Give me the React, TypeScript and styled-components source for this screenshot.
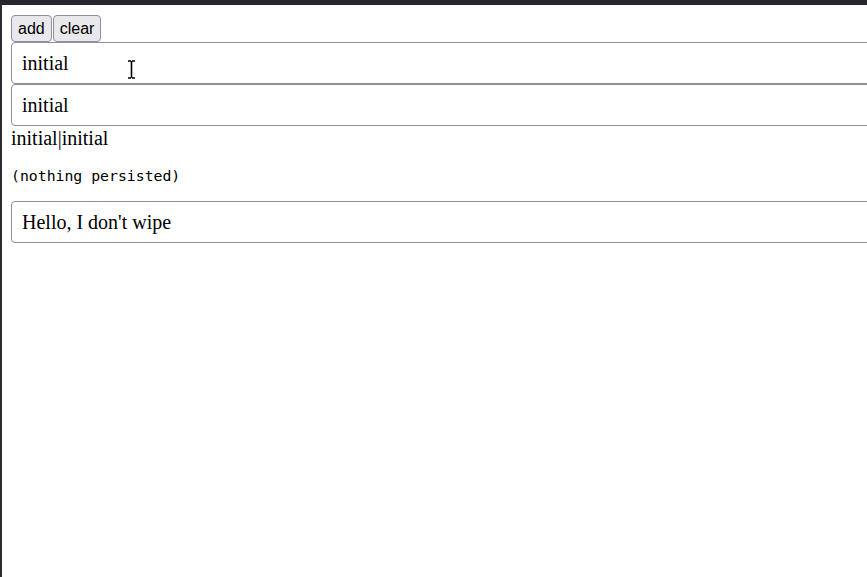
import React, { useState } from "react";
import styled, { createGlobalStyle } from "styled-components";

const Global = createGlobalStyle`
  html, body {
    margin: 0;
    padding: 0;
    background: #ffffff;
  }
  body {
    font-family: "Liberation Serif", "Times New Roman", serif;
  }
`;

const Frame = styled.div`
  box-sizing: border-box;
  min-height: 100vh;
  border-top: 5px solid #26262c;
  border-left: 2px solid #2c2c31;
  padding: 10px 0 0 9px;
  overflow: hidden;
  position: relative;
`;

const Stack = styled.div`
  display: flex;
  flex-direction: column;
  align-items: flex-start;
`;

const Toolbar = styled.div`
  display: flex;
  gap: 1px;
`;

const Button = styled.button`
  box-sizing: border-box;
  height: 27px;
  padding: 0 6px;
  font-family: "Liberation Sans", Arial, sans-serif;
  font-size: 16px;
  color: #000;
  background: #e9e9ed;
  border: 1px solid #8f8f9d;
  border-radius: 4px;
  cursor: default;
`;

const Field = styled.input`
  box-sizing: border-box;
  width: calc(100% + 40px);
  height: 42px;
  padding: 0 10px;
  margin: 0;
  font-family: "Liberation Serif", "Times New Roman", serif;
  font-size: 20px;
  color: #000;
  background: #fff;
  border: 1px solid #8f8f9d;
  border-radius: 4px;
  outline: none;
`;

const Joined = styled.div`
  font-size: 20px;
  line-height: 23px;
  margin-top: 1px;
  color: #000;
`;

const Note = styled.pre`
  margin: 17px 0;
  font-family: "DejaVu Sans Mono", "Liberation Mono", monospace;
  font-size: 14.8px;
  line-height: 17px;
  color: #000;
`;

const Pointer = styled.svg`
  position: absolute;
  left: 125px;
  top: 55px;
  pointer-events: none;
`;

export default function App() {
  const [items, setItems] = useState<string[]>(["initial", "initial"]);
  const [kept, setKept] = useState("Hello, I don't wipe");

  return (
    <>
      <Global />
      <Frame>
        <Stack>
          <Toolbar>
            <Button onClick={() => setItems((s) => [...s, "initial"])}>add</Button>
            <Button onClick={() => setItems([])}>clear</Button>
          </Toolbar>
          {items.map((v, i) => (
            <Field
              key={i}
              value={v}
              onChange={(e) =>
                setItems((s) => s.map((x, j) => (j === i ? e.target.value : x)))
              }
            />
          ))}
          <Joined>{items.join("|")}</Joined>
          <Note>(nothing persisted)</Note>
          <Field value={kept} onChange={(e) => setKept(e.target.value)} />
        </Stack>
        <Pointer width="9" height="19" viewBox="0 0 9 19">
          <path
            d="M1 1h3M5 1h3M4.5 1v17M1 18h3M5 18h3"
            stroke="#000"
            strokeWidth="1.6"
            fill="none"
          />
        </Pointer>
      </Frame>
    </>
  );
}
